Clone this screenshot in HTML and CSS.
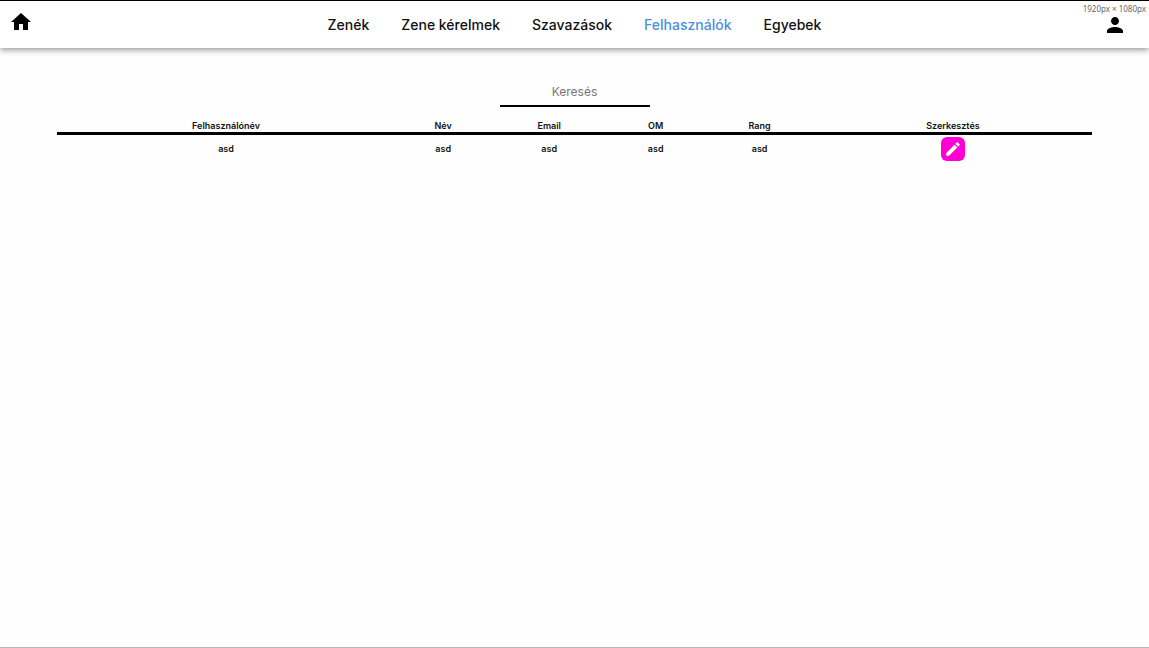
FILE: index.html
```html
<!DOCTYPE html>
<html lang="hu">
<head>
<meta charset="utf-8">
<meta name="viewport" content="width=device-width, initial-scale=1">
<title>Felhasználók</title>
<link rel="stylesheet" href="styles.css">
</head>
<body>
<header class="topbar">
  <a class="icon-link" href="#" aria-label="Kezdőlap">
    <svg class="icon" viewBox="0 0 24 24" aria-hidden="true"><path d="M10 20v-6h4v6h5v-8h3L12 3 2 12h3v8z"/></svg>
  </a>
  <nav class="menu">
    <a href="#">Zenék</a>
    <a href="#">Zene kérelmek</a>
    <a href="#">Szavazások</a>
    <a class="active" href="#" aria-current="page">Felhasználók</a>
    <a href="#">Egyebek</a>
  </nav>
  <a class="icon-link profile" href="#" aria-label="Profil">
    <svg class="icon" viewBox="0 0 24 24" aria-hidden="true"><path d="M12 12c2.21 0 4-1.79 4-4s-1.79-4-4-4-4 1.79-4 4 1.79 4 4 4zm0 2c-2.67 0-8 1.34-8 4v2h16v-2c0-2.66-5.33-4-8-4z"/></svg>
  </a>
  <span class="viewport-size">1920px × 1080px</span>
</header>
<main class="content">
  <input class="search" type="text" placeholder="Keresés" aria-label="Keresés">
  <table class="users">
    <colgroup>
      <col class="col-user"><col class="col-name"><col class="col-email"><col class="col-om"><col class="col-rank"><col class="col-edit">
    </colgroup>
    <thead>
      <tr><th>Felhasználónév</th><th>Név</th><th>Email</th><th>OM</th><th>Rang</th><th>Szerkesztés</th></tr>
    </thead>
    <tbody>
      <tr>
        <td>asd</td><td>asd</td><td>asd</td><td>asd</td><td>asd</td>
        <td>
          <button class="edit" type="button" aria-label="Szerkesztés">
            <svg viewBox="0 0 24 24" aria-hidden="true"><path d="M3 17.25V21h3.75L17.81 9.94l-3.75-3.75L3 17.25zM20.71 7.04c.39-.39.39-1.02 0-1.41l-2.34-2.34c-.39-.39-1.02-.39-1.41 0l-1.83 1.83 3.75 3.75 1.83-1.83z"/></svg>
          </button>
        </td>
      </tr>
    </tbody>
  </table>
</main>
</body>
</html>
```
FILE: styles.css
```css
* {
  box-sizing: border-box;
}

body {
  display: flex;
  flex-direction: column;
  min-height: 100vh;
  margin: 0;
  border-top: 1px solid #000;
  border-bottom: 1px solid #b8b8b8;
  background: #fefefe;
  color: #111;
  font-family: Inter, "Liberation Sans", sans-serif;
}

.topbar {
  position: relative;
  display: grid;
  grid-template-columns: 1fr auto 1fr;
  align-items: center;
  height: 47px;
  background: #fff;
  box-shadow: 0 2px 6px rgba(0, 0, 0, 0.4);
}

.icon-link {
  display: flex;
  justify-self: start;
  padding: 0 0 5px 9px;
  color: #000;
}

.profile {
  justify-self: end;
  padding: 0 22px 0 0;
}

.icon {
  width: 24px;
  height: 24px;
  fill: currentColor;
}

.menu {
  display: flex;
  gap: 32px;
  font-size: 14px;
  font-weight: 500;
  line-height: 20px;
}

.menu a {
  color: #111;
  text-decoration: none;
}

.menu .active {
  color: #4a8fe2;
}

.viewport-size {
  position: absolute;
  top: 2px;
  right: 3px;
  color: #666;
  font-family: "Noto Sans", "Open Sans", sans-serif;
  font-size: 8px;
  line-height: 12px;
}

.content {
  display: flex;
  flex-direction: column;
  align-items: center;
  padding-top: 28px;
}

.search {
  width: 150px;
  height: 31px;
  padding: 2px 0 0;
  border: 0;
  border-bottom: 2px solid #000;
  background: transparent;
  font-family: inherit;
  font-size: 12px;
  text-align: center;
  outline: 0;
}

.search::placeholder {
  color: #777;
}

.users {
  width: 90%;
  margin-top: 13px;
  border-collapse: collapse;
  table-layout: fixed;
  font-size: 9px;
  line-height: 12px;
  text-align: center;
}

.users th {
  padding: 0;
  border-bottom: 3px solid #000;
  font-weight: 600;
}

.users td {
  padding: 2px 0;
  font-weight: 600;
  vertical-align: middle;
}

.col-user { width: 32.6%; }
.col-name { width: 9.4%; }
.col-email { width: 11.1%; }
.col-om { width: 9.5%; }
.col-rank { width: 10.6%; }
.col-edit { width: 26.8%; }

.edit {
  display: block;
  width: 24px;
  height: 24px;
  margin: 0 auto;
  padding: 3px;
  border: 0;
  border-radius: 6px;
  background: #ff00d4;
}

.edit svg {
  display: block;
  width: 18px;
  height: 18px;
  fill: #fff;
}
```
